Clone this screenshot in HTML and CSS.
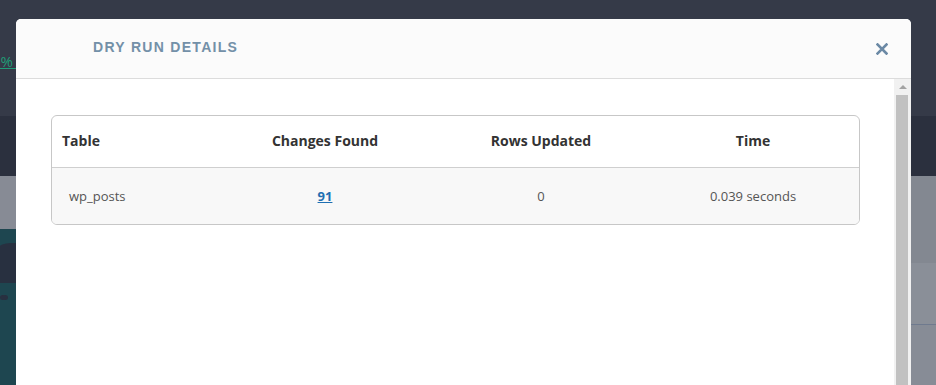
FILE: index.html
```html
<!DOCTYPE html>
<html lang="en">
<head>
    <meta charset="UTF-8">
    <title>Dry run details</title>
    <link rel="stylesheet" href="styles.css">
</head>
<body>

<div class="page">
    <div class="topbar">
        <a class="notice" href="#">0% complete</a>
    </div>
    <div class="subbar"></div>
    <div class="main">
        <div class="side">
            <div class="side-gray"></div>
            <div class="side-teal">
                <div class="blob blob1"></div>
                <div class="blob blob2"></div>
            </div>
        </div>
        <div class="content">
            <div class="band band1"></div>
            <div class="band band2"></div>
            <div class="band band3"></div>
        </div>
    </div>
</div>

<div class="modal">
    <div class="modal-header">
        <h2 class="modal-title">DRY RUN DETAILS</h2>
        <a class="close" href="#">
            <svg width="12" height="12" viewBox="0 0 12 12">
                <path d="M1.5 1.5 L10.5 10.5 M10.5 1.5 L1.5 10.5" stroke="#6b89a5" stroke-width="2.6" stroke-linecap="square"/>
            </svg>
        </a>
    </div>
    <div class="modal-body">
        <div class="modal-content">
            <table class="results">
                <colgroup>
                    <col class="w-table">
                    <col class="w-changes">
                    <col class="w-rows">
                    <col>
                </colgroup>
                <thead>
                    <tr>
                        <th class="col-table">Table</th>
                        <th>Changes Found</th>
                        <th>Rows Updated</th>
                        <th>Time</th>
                    </tr>
                </thead>
                <tbody>
                    <tr>
                        <td class="col-table">wp_posts</td>
                        <td><a href="#">91</a></td>
                        <td>0</td>
                        <td>0.039 seconds</td>
                    </tr>
                </tbody>
            </table>
        </div>
        <div class="scrollbar">
            <div class="scroll-up"></div>
            <div class="scroll-thumb"></div>
        </div>
    </div>
</div>

</body>
</html>
```

FILE: styles.css
```css
body {
    margin: 0;
    height: 385px;
    overflow: hidden;
    font-family: "Open Sans", sans-serif;
    background-color: #878c96;
}

/* page behind the overlay */
.page {
    display: flex;
    flex-direction: column;
}
.topbar {
    height: 116px;
    background-color: #353a48;
    box-sizing: border-box;
    padding-top: 50px;
}
.notice {
    display: inline-block;
    margin-left: -11px;
    font-size: 15px;
    letter-spacing: 3px;
    color: #1f9d77;
}
.subbar {
    height: 60px;
    background-color: #2b303e;
}
.main {
    display: flex;
}
.side {
    width: 400px;
}
.side-gray {
    height: 53px;
    background-color: #878b95;
}
.side-teal {
    height: 156px;
    background-color: #1e4650;
    position: relative;
    overflow: hidden;
}
.blob {
    position: absolute;
    background-color: #283040;
}
.blob1 {
    left: -10px;
    top: 14px;
    width: 40px;
    height: 40px;
    border-radius: 20px 10px 0 0;
}
.blob2 {
    left: 0;
    top: 66px;
    width: 8px;
    height: 5px;
    border-radius: 3px;
}
.content {
    flex: 1;
}
.band1 {
    height: 87px;
    background-color: #838891;
}
.band2 {
    height: 61px;
    background-color: #8a8f98;
    border-bottom: 1px solid #6f7a8e;
}
.band3 {
    height: 60px;
    background-color: #878c96;
}

/* modal */
.modal {
    position: absolute;
    left: 16px;
    top: 19px;
    width: 895px;
    height: 366px;
    background-color: #fff;
    border-radius: 5px 5px 0 0;
    overflow: hidden;
}
.modal-header {
    height: 60px;
    box-sizing: border-box;
    background-color: #fbfbfb;
    border-bottom: 1px solid #dcdcdc;
    display: flex;
    align-items: center;
    justify-content: space-between;
    padding: 0 23px 0 77px;
}
.modal-title {
    margin: 0;
    font-family: "Liberation Sans", Arial, sans-serif;
    font-size: 14px;
    font-weight: bold;
    letter-spacing: 1.3px;
    color: #7390a8;
    position: relative;
    top: -2px;
}
.close {
    display: flex;
    width: 12px;
    height: 12px;
}
.modal-body {
    display: flex;
    height: 306px;
}
.modal-content {
    flex: 1;
    padding: 36px 34px 0 35px;
}

.scrollbar {
    width: 17px;
    background-color: #f1f1f1;
    display: flex;
    flex-direction: column;
    align-items: center;
}
.scroll-up {
    width: 0;
    height: 0;
    border-left: 4px solid transparent;
    border-right: 4px solid transparent;
    border-bottom: 4px solid #a3a3a3;
    margin: 6px 0;
}
.scroll-thumb {
    width: 12px;
    flex: 1;
    background-color: #c1c1c1;
    margin-right: 1px;
}

/* results table */
.results {
    width: 809px;
    border: 1px solid #c7c7c7;
    border-radius: 6px;
    border-spacing: 0;
    overflow: hidden;
    table-layout: fixed;
}
.w-table {
    width: 163px;
}
.w-changes {
    width: 220px;
}
.w-rows {
    width: 212px;
}
.results th {
    height: 49px;
    padding: 0 0 2px;
    font-size: 14px;
    font-weight: bold;
    color: #333;
    text-align: center;
    border-bottom: 1px solid #cfcfcf;
}
.results td {
    height: 55px;
    padding: 0 0 1px;
    font-size: 13px;
    color: #555;
    text-align: center;
    background-color: #f8f8f8;
}
.results a {
    color: #1f6fb2;
    font-weight: bold;
}
.results .col-table {
    text-align: left;
}
th.col-table {
    padding-left: 10px;
}
td.col-table {
    padding-left: 17px;
}
```
